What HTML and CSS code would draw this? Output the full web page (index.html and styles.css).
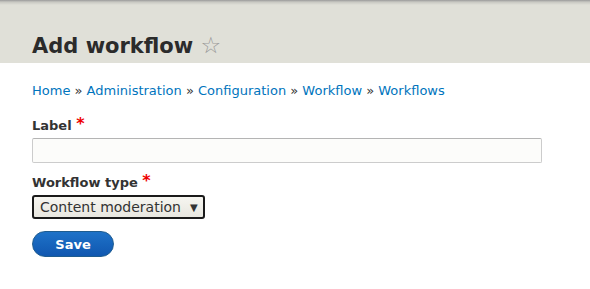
FILE: index.html
```html
<!DOCTYPE html>
<html lang="en">
<head>
    <meta charset="UTF-8">
    <meta name="viewport" content="width=device-width, initial-scale=1.0">
    <title>Add workflow</title>
    <link rel="stylesheet" href="styles.css">
</head>
<body>
    <header class="page-header">
        <h1 class="page-title">Add workflow <span class="shortcut-star">&#9734;</span></h1>
    </header>
    <main class="content">
        <nav class="breadcrumb">
            <a href="#">Home</a> » <a href="#">Administration</a> » <a href="#">Configuration</a> » <a href="#">Workflow</a> » <a href="#">Workflows</a>
        </nav>
        <form class="workflow-form">
            <div class="form-item">
                <label for="label-input" class="form-label">Label <span class="required">*</span></label>
                <input type="text" id="label-input" class="form-text">
            </div>
            <div class="form-item">
                <label for="type-select" class="form-label">Workflow type <span class="required">*</span></label>
                <div class="select-box">
                    <span>Content moderation</span>
                    <span class="select-arrow">&#9660;</span>
                </div>
            </div>
            <div class="form-actions">
                <button type="button" class="button-primary">Save</button>
            </div>
        </form>
    </main>
</body>
</html>
```

FILE: styles.css
```css
body {
    font-family: 'DejaVu Sans', sans-serif;
    font-size: 13px;
    color: #333;
    margin: 0;
    padding: 0;
    background: #fff;
}

.page-header {
    background: linear-gradient(to bottom, #9a9a9a 0, #c8c8c2 2px, #e0e0d8 5px, #e0e0d8 100%);
    height: 63px;
    box-sizing: border-box;
    padding: 30px 32px 0;
}

.page-title {
    margin: 0;
    font-size: 21px;
    font-weight: bold;
    color: #2b2b2b;
    line-height: 30px;
}

.shortcut-star {
    font-weight: normal;
    color: #999;
    font-size: 23px;
}

.content {
    padding: 19px 32px 0;
}

.breadcrumb {
    color: #333;
    line-height: 18px;
}

.breadcrumb a {
    color: #0074bd;
    text-decoration: none;
}

.workflow-form {
    margin-top: 17px;
}

.form-item {
    margin-bottom: 11px;
}

.form-label {
    display: block;
    font-weight: bold;
    color: #333;
    line-height: 18px;
    margin-bottom: 3px;
}

.required {
    color: #e00;
    font-size: 16px;
    vertical-align: top;
    line-height: 14px;
}

.form-text {
    display: block;
    width: 510px;
    height: 25px;
    box-sizing: border-box;
    border: 1px solid #ccc;
    border-top-color: #b4b4b4;
    border-radius: 2px;
    background: #fcfcfa;
    padding: 3px 5px;
}

.select-box {
    display: inline-flex;
    align-items: center;
    gap: 9px;
    box-sizing: border-box;
    height: 24px;
    padding: 0 5px 0 6px;
    border: 2px solid #1a1a1a;
    border-radius: 3px;
    background: linear-gradient(to bottom, #f6f5f0, #e8e7e0);
    color: #333;
    font-size: 14px;
}

.select-arrow {
    font-size: 10px;
    color: #333;
}

.form-actions {
    margin-top: 12px;
}

.button-primary {
    width: 82px;
    height: 26px;
    border: 1px solid #1e5c90;
    border-radius: 13px;
    background: linear-gradient(to bottom, #1e72c8, #1057b0);
    color: #fff;
    font-family: 'DejaVu Sans', sans-serif;
    font-size: 13px;
    font-weight: bold;
    cursor: pointer;
}
```
